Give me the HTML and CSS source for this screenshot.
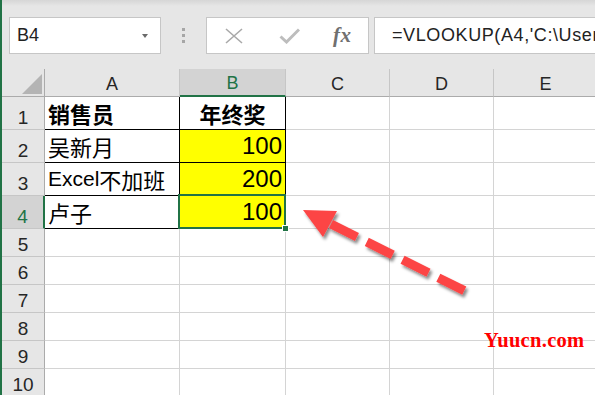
FILE: index.html
```html
<!DOCTYPE html>
<html lang="zh">
<head>
<meta charset="utf-8">
<link rel="stylesheet" href="styles.css">
</head>
<body>
<div class="app">
  <div class="strip"></div>
  <div class="main">
    <div class="toolbar">
      <div class="namebox"><span class="ref">B4</span><span class="caret"></span></div>
      <div class="sep"><i></i><i></i><i></i></div>
      <div class="btns">
        <svg class="icon-x" width="18" height="16" viewBox="0 0 18 16"><path d="M1 1 L17 15 M17 1 L1 15" stroke="#a9a9a9" stroke-width="1.6" fill="none"/></svg>
        <svg class="icon-check" width="21" height="16" viewBox="0 0 21 16"><path d="M1.5 8.5 L7.5 14 L20 1.5" stroke="#bdbdbd" stroke-width="3" fill="none"/></svg>
        <span class="fx">fx</span>
      </div>
      <div class="formula">=VLOOKUP(A4,'C:\Users\</div>
    </div>
    <div class="sheet">
      <div class="corner"><span class="tri"></span></div>
      <div class="ch">A</div>
      <div class="ch sel">B</div>
      <div class="ch">C</div>
      <div class="ch">D</div>
      <div class="ch">E</div>

      <div class="rh">1</div>
      <div class="c t txt bold">销售员</div>
      <div class="c t center bold">年终奖</div>
      <div class="c"></div><div class="c"></div><div class="c"></div>

      <div class="rh">2</div>
      <div class="c t txt">吴新月</div>
      <div class="c t y num">100</div>
      <div class="c"></div><div class="c"></div><div class="c"></div>

      <div class="rh">3</div>
      <div class="c t txt"><span class="lat">Excel</span>不加班</div>
      <div class="c t y num">200</div>
      <div class="c"></div><div class="c"></div><div class="c"></div>

      <div class="rh sel">4</div>
      <div class="c t txt">卢子</div>
      <div class="c t y num active">100<span class="frame"></span><span class="handle"></span></div>
      <div class="c"></div><div class="c"></div><div class="c"></div>

      <div class="rh">5</div><div class="c"></div><div class="c"></div><div class="c"></div><div class="c"></div><div class="c"></div>
      <div class="rh">6</div><div class="c"></div><div class="c"></div><div class="c"></div><div class="c"></div><div class="c"></div>
      <div class="rh">7</div><div class="c"></div><div class="c"></div><div class="c"></div><div class="c"></div><div class="c"></div>
      <div class="rh">8</div><div class="c"></div><div class="c"></div><div class="c"></div><div class="c"></div><div class="c"></div>
      <div class="rh">9</div><div class="c"></div><div class="c"></div><div class="c"></div><div class="c"></div><div class="c"></div>
      <div class="rh">10</div><div class="c"></div><div class="c"></div><div class="c"></div><div class="c"></div><div class="c"></div>
    </div>
  </div>
  <svg class="arrow" width="595" height="395" viewBox="0 0 595 395">
    <defs>
      <filter id="sh" x="-20%" y="-20%" width="140%" height="150%">
        <feDropShadow dx="2" dy="3" stdDeviation="1.8" flood-color="#000" flood-opacity="0.45"/>
      </filter>
    </defs>
    <g filter="url(#sh)">
      <polygon points="303,210 337,211 323,237" fill="#fc4545"/>
      <line x1="331" y1="224" x2="467" y2="292" stroke="#fc4545" stroke-width="9" stroke-dasharray="29 11"/>
    </g>
  </svg>
  <div class="watermark">Yuucn.com</div>
</div>
</body>
</html>
```
FILE: styles.css
```css
html, body {
  margin: 0;
  padding: 0;
  width: 595px;
  height: 395px;
  overflow: hidden;
  background: #e6e6e6;
}

.app {
  position: relative;
  display: flex;
  width: 595px;
  height: 395px;
  overflow: hidden;
  font-family: "Liberation Sans", "Noto Sans CJK SC", sans-serif;
  color: #1f1f1f;
}

.strip {
  width: 2px;
  flex: none;
  background: #217346;
}

.main {
  flex: 1;
  display: flex;
  flex-direction: column;
  min-width: 0;
}

/* ---------- formula toolbar ---------- */
.toolbar {
  height: 69px;
  flex: none;
  display: flex;
  align-items: flex-start;
  padding: 17px 0 0 7px;
  box-sizing: border-box;
  background: linear-gradient(#d6d6d6 0, #e6e6e6 6px);
}

.namebox {
  width: 152px;
  height: 37px;
  box-sizing: border-box;
  background: #fff;
  border: 1px solid #c6c6c6;
  display: flex;
  align-items: center;
  justify-content: space-between;
  padding: 0 12px 0 7px;
  font-size: 18px;
  color: #222;
}

.caret {
  width: 0;
  height: 0;
  border-left: 3.5px solid transparent;
  border-right: 3.5px solid transparent;
  border-top: 4px solid #6a6a6a;
}

.sep {
  width: 45px;
  height: 37px;
  display: flex;
  flex-direction: column;
  align-items: center;
  justify-content: center;
  gap: 3px;
}

.sep i {
  display: block;
  width: 3px;
  height: 3px;
  background: #a6a6a6;
}

.btns {
  width: 163px;
  height: 37px;
  box-sizing: border-box;
  background: #fff;
  border: 1px solid #c6c6c6;
  display: flex;
  align-items: center;
}

.icon-x { margin-left: 18px; }
.icon-check { margin-left: 36px; }

.fx {
  margin-left: 33px;
  font-family: "Liberation Serif", serif;
  font-style: italic;
  font-weight: bold;
  font-size: 21px;
  color: #707070;
  letter-spacing: 0.5px;
}

.formula {
  flex: 1;
  margin-left: 5px;
  height: 37px;
  box-sizing: border-box;
  background: #fff;
  border: 1px solid #c6c6c6;
  border-right: none;
  display: flex;
  align-items: center;
  padding-left: 17px;
  font-size: 18px;
  letter-spacing: 0.6px;
  color: #222;
  white-space: nowrap;
  overflow: hidden;
}

/* ---------- sheet grid ---------- */
.sheet {
  display: grid;
  grid-template-columns: 43px 135px 106px 104px 104px 104px;
  grid-template-rows: 28px repeat(4, 33px) repeat(6, 28px);
  background: #fff;
}

.sheet > div {
  box-sizing: border-box;
}

.corner {
  background: #e6e6e6;
  border-right: 1px solid #ababab;
  border-bottom: 1px solid #ababab;
  display: flex;
  justify-content: flex-end;
  align-items: flex-end;
  padding: 0 2px 2px 0;
}

.tri {
  width: 20px;
  height: 20px;
  background: #b4b4b4;
  clip-path: polygon(100% 0, 100% 100%, 0 100%);
}

.ch {
  background: #e6e6e6;
  border-right: 1px solid #c6c6c6;
  border-bottom: 1px solid #ababab;
  display: flex;
  justify-content: center;
  align-items: center;
  padding-top: 3px;
  font-size: 18px;
  color: #262626;
}

.ch.sel {
  background: #d3d3d3;
  color: #217346;
  border-bottom: 2px solid #217346;
}

.rh {
  background: #e6e6e6;
  border-right: 1px solid #ababab;
  border-bottom: 1px solid #c6c6c6;
  display: flex;
  justify-content: center;
  align-items: flex-end;
  font-size: 19px;
  color: #262626;
}

.rh.sel {
  background: #d3d3d3;
  color: #217346;
  border-right: 2px solid #217346;
}

.c {
  border-right: 1px solid #d4d4d4;
  border-bottom: 1px solid #d4d4d4;
  display: flex;
  align-items: center;
  font-size: 22px;
  color: #000;
  white-space: nowrap;
}

.c.t {
  border-right-color: #000;
  border-bottom-color: #000;
}

.txt { padding-left: 3px; }

.lat { font-size: 21px; }

.bold { font-weight: bold; }

.center { justify-content: center; }

.y { background: #ffff00; }

.num {
  justify-content: flex-end;
  padding-right: 3px;
  font-size: 24px;
}

.active { position: relative; }

.frame {
  position: absolute;
  left: -2px;
  top: -2px;
  right: -1px;
  bottom: -1px;
  border: 2px solid #217346;
}

.handle {
  position: absolute;
  right: -4px;
  bottom: -4px;
  width: 7px;
  height: 7px;
  box-sizing: border-box;
  background: #217346;
  border: 1px solid #fff;
}

/* ---------- overlays ---------- */
.arrow {
  position: absolute;
  left: 0;
  top: 0;
  pointer-events: none;
}

.watermark {
  position: absolute;
  left: 484px;
  top: 330px;
  font-family: "Liberation Serif", serif;
  font-weight: bold;
  font-size: 20.5px;
  line-height: 20px;
  letter-spacing: 0.3px;
  color: #ff0000;
}
```
